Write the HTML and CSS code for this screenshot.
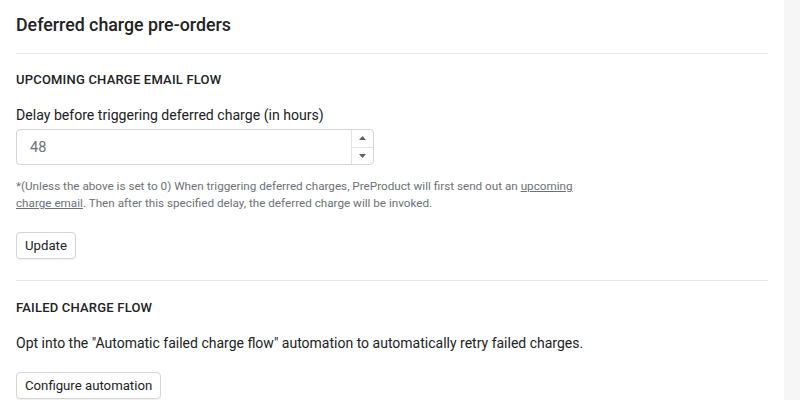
FILE: index.html
```html
<!DOCTYPE html>
<html lang="en">
<head>
<meta charset="utf-8">
<title>Deferred charge pre-orders</title>
<link rel="stylesheet" href="styles.css">
</head>
<body>
<div class="card">
  <div class="card-header">
    <h2 class="card-title">Deferred charge pre-orders</h2>
  </div>
  <section class="card-section">
    <h3 class="section-title">UPCOMING CHARGE EMAIL FLOW</h3>
    <label class="field-label" for="delay">Delay before triggering deferred charge (in hours)</label>
    <div class="number-field">
      <input id="delay" class="number-input" type="text" value="48">
      <div class="spinner">
        <span class="spin spin-up"><svg width="7" height="4" viewBox="0 0 7 4"><path d="M3.5 0 L7 4 L0 4 Z" fill="#5c5f62"/></svg></span>
        <span class="spin spin-down"><svg width="7" height="4" viewBox="0 0 7 4"><path d="M0 0 L7 0 L3.5 4 Z" fill="#5c5f62"/></svg></span>
      </div>
    </div>
    <p class="help-text">*(Unless the above is set to 0) When triggering deferred charges, PreProduct will first send out an <a href="#">upcoming charge email</a>. Then after this specified delay, the deferred charge will be invoked.</p>
    <button class="btn" type="button">Update</button>
  </section>
  <section class="card-section second">
    <h3 class="section-title">FAILED CHARGE FLOW</h3>
    <p class="body-text">Opt into the "Automatic failed charge flow" automation to automatically retry failed charges.</p>
    <button class="btn" type="button">Configure automation</button>
  </section>
</div>
</body>
</html>
```
FILE: styles.css
```css
* { box-sizing: border-box; }
html, body { margin: 0; padding: 0; }
body {
  background: #f6f6f7;
  font-family: Roboto, "Liberation Sans", sans-serif;
  color: #202223;
  height: 400px;
  overflow: hidden;
}
.card {
  width: 784px;
  background: #ffffff;
  min-height: 400px;
  padding: 0 16px;
}
.card-header {
  padding: 13px 0 16px;
  border-bottom: 1px solid #e7e8e9;
}
.card-title {
  margin: 0;
  font-size: 17.8px;
  line-height: 24px;
  font-weight: 500;
  color: #202223;
}
.card-section {
  padding: 18px 0 21px;
}
.card-section.second {
  padding-top: 19px;
  border-top: 1px solid #e7e8e9;
}
.section-title {
  margin: 0 0 17px;
  font-size: 13px;
  line-height: 16px;
  font-weight: 500;
  letter-spacing: 0.2px;
}
.field-label {
  display: block;
  font-size: 14.1px;
  line-height: 20px;
  margin-bottom: 4px;
}
.number-field {
  display: flex;
  width: 358px;
  height: 36px;
  border: 1px solid #d2d5d8;
  border-radius: 4px;
  background: #fff;
}
.number-input {
  flex: 1;
  min-width: 0;
  border: 0;
  outline: none;
  padding: 0 13px;
  font-family: inherit;
  font-size: 14.5px;
  color: #6d7175;
  background: transparent;
}
.spinner {
  width: 22px;
  display: flex;
  flex-direction: column;
  border-left: 1px solid #e1e3e5;
}
.spin {
  flex: 1;
  display: flex;
  align-items: center;
  justify-content: center;
}
.spin-up { border-bottom: 1px solid #e1e3e5; }
.help-text {
  margin: 13px 0 20px;
  width: 580px;
  font-size: 11.7px;
  line-height: 17px;
  color: #6d7175;
}
.help-text a {
  color: #6d7175;
  text-decoration: underline;
}
.body-text {
  margin: 0 0 19px;
  font-size: 14px;
  line-height: 20px;
}
.btn {
  display: inline-block;
  height: 27px;
  padding: 0 8px;
  font-family: inherit;
  font-size: 13.2px;
  color: #202223;
  background: #fff;
  border: 1px solid #d2d5d8;
  border-radius: 4px;
  box-shadow: 0 1px 0 rgba(0,0,0,0.05);
}
```
